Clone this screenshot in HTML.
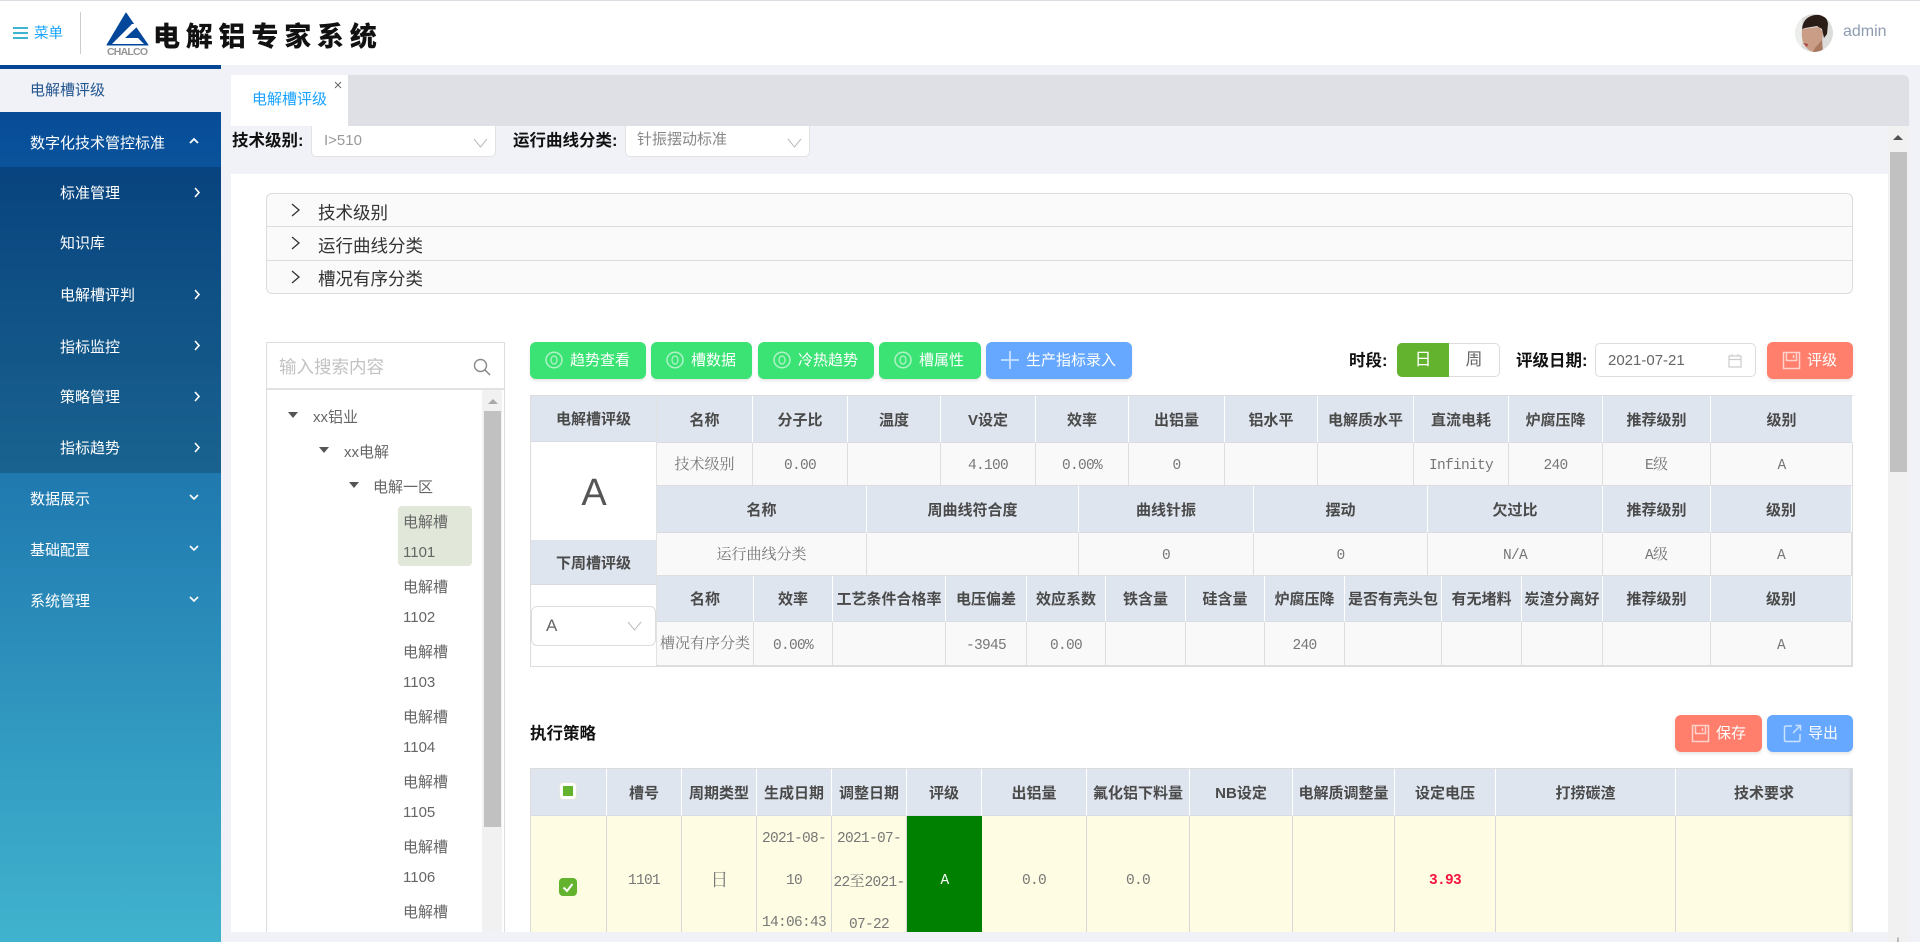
<!DOCTYPE html>
<html lang="zh-CN"><head><meta charset="utf-8"><title>电解铝专家系统</title>
<style>
*{box-sizing:border-box;margin:0;padding:0}
html,body{width:1920px;height:942px;overflow:hidden;background:#f0f2f7;font-family:"Liberation Sans","Noto Sans CJK SC",sans-serif;font-size:15px;color:#555}
.a{position:absolute;white-space:nowrap}
svg{display:block}
.s{left:30px;color:#fff;height:30px;line-height:30px}
.sub{left:60px;color:#fff;height:30px;line-height:30px}
.btn{height:37px;border-radius:6px;color:#fff;line-height:37px;box-shadow:0 2px 3px rgba(0,0,0,.1);top:342px}
.g{background:#3be274}.b{background:#66a8ff}.r{background:#ff7f6c}
.lb{line-height:30px;color:#111;font-weight:700;font-size:16.500px}
.tr{position:absolute;display:grid}
.tr>div{display:flex;align-items:center;justify-content:center;white-space:nowrap;overflow:hidden}
.h>div{background:#dfe5ef;color:#4a4a4a;font-weight:700;border-right:1px solid #fff;border-bottom:1px solid #d8dce2}
.d>div{background:#f9f9f9;color:#777;font-family:"Liberation Mono","Noto Serif CJK SC",monospace;font-size:14.500px;letter-spacing:-.7px;border-right:1px solid #dedede;border-bottom:1px solid #dedede;padding-top:4px}
.d span{font-family:"Noto Serif CJK SC","Liberation Serif",serif;font-size:15px;letter-spacing:0;position:relative;top:-3px}
.t{left:403px;color:#666;height:24px;line-height:24px}
.col{display:grid;grid-template-columns:96px 95px 93px 95px 93px 96px 93px 96px 95px 94px 108px 142px}
.tri{width:0;height:0;border-left:5px solid transparent;border-right:5px solid transparent;border-top:6px solid #555}
.y>div{background:#fefde3;color:#777;font-family:"Liberation Mono","Noto Serif CJK SC",monospace;font-size:14.500px;letter-spacing:-.7px;border-right:1px solid #d8d8d8;text-align:center;white-space:normal;padding-top:4px}
</style></head><body>

<!-- header -->
<div class="a" style="left:0;top:0;width:1920px;height:65px;background:#fff;border-top:1px solid #dcdde2"></div>
<svg class="a" style="left:13px;top:26px" width="16" height="14"><rect y="1" width="15" height="2" fill="#3fb4d0"/><rect y="6" width="15" height="2" fill="#3fb4d0"/><rect y="11" width="15" height="2" fill="#3fb4d0"/></svg>
<div class="a" style="left:34px;top:23px;line-height:22px;font-size:14.500px;color:#1aa3ff">菜单</div>
<div class="a" style="left:80px;top:12px;width:1px;height:42px;background:#ccc"></div>
<svg class="a" style="left:106px;top:12px" width="44" height="44" viewBox="0 0 44 44">
<path d="M20 1L42 33H1Z" fill="#03479b" stroke="#03479b" stroke-linejoin="round"/>
<path d="M26 12L34 12L19 26L32 26L38 32H6Z" fill="#fff"/>
<text x="1" y="43" font-family="Liberation Sans" font-size="10.500" font-weight="700" fill="#959595" textLength="41">CHALCO</text></svg>
<div class="a" style="left:153px;top:15px;line-height:40px;font-size:27px;font-weight:900;letter-spacing:5.800px;color:#111;font-family:'Noto Sans CJK SC',sans-serif">电解铝专家系统</div>
<svg class="a" style="left:1795px;top:14px;border-radius:50%" width="38" height="38" viewBox="0 0 38 38">
<rect width="38" height="38" fill="#dcdcda"/><rect width="7" height="38" fill="#eceeec"/>
<path d="M7 15Q6 24 9 30Q12 36 18 38H26L27 30L28 18L24 13Z" fill="#c99d86"/>
<path d="M20 34L27 26L28 38H18Z" fill="#a87860"/>
<path d="M7 15Q8 3 20 1Q32 0 33 10L32 20L29 24L27 15L22 12L10 14Z" fill="#2a1d18"/>
<path d="M8 29L13 30L12 33Z" fill="#a8433f"/></svg>
<div class="a" style="left:1843px;top:20px;line-height:24px;font-size:16px;color:#8e9bb0">admin</div>

<!-- sidebar -->
<div class="a" style="left:0;top:65px;width:221px;height:877px;background:linear-gradient(180deg,#034694 0,#40b3ce 100%)"></div>
<div class="a" style="left:0;top:69px;width:221px;height:43px;background:#f0f2f7"></div>
<div class="a" style="left:0;top:167px;width:221px;height:306px;background:rgba(0,0,0,.18)"></div>
<div class="a" style="left:30px;top:76px;height:30px;line-height:30px;color:#24568f;font-size:15px">电解槽评级</div>
<div class="a s" style="top:129px">数字化技术管控标准</div>
<svg class="a" style="left:188px;top:136px" width="12" height="10"><path d="M2 7L6 3L10 7" fill="none" stroke="#fff" stroke-width="1.800"/></svg>
<div class="a sub" style="top:179px">标准管理</div>
<div class="a sub" style="top:229px">知识库</div>
<div class="a sub" style="top:281px">电解槽评判</div>
<div class="a sub" style="top:333px">指标监控</div>
<div class="a sub" style="top:383px">策略管理</div>
<div class="a sub" style="top:434px">指标趋势</div>
<svg class="a" style="left:192px;top:186px" width="10" height="13"><path d="M3 2L7 6.500L3 11" fill="none" stroke="#fff" stroke-width="1.600"/></svg>
<svg class="a" style="left:192px;top:288px" width="10" height="13"><path d="M3 2L7 6.500L3 11" fill="none" stroke="#fff" stroke-width="1.600"/></svg>
<svg class="a" style="left:192px;top:339px" width="10" height="13"><path d="M3 2L7 6.500L3 11" fill="none" stroke="#fff" stroke-width="1.600"/></svg>
<svg class="a" style="left:192px;top:390px" width="10" height="13"><path d="M3 2L7 6.500L3 11" fill="none" stroke="#fff" stroke-width="1.600"/></svg>
<svg class="a" style="left:192px;top:441px" width="10" height="13"><path d="M3 2L7 6.500L3 11" fill="none" stroke="#fff" stroke-width="1.600"/></svg>
<div class="a s" style="top:485px">数据展示</div>
<div class="a s" style="top:536px">基础配置</div>
<div class="a s" style="top:587px">系统管理</div>
<svg class="a" style="left:188px;top:492px" width="12" height="10"><path d="M2 3L6 7L10 3" fill="none" stroke="#fff" stroke-width="1.600"/></svg>
<svg class="a" style="left:188px;top:543px" width="12" height="10"><path d="M2 3L6 7L10 3" fill="none" stroke="#fff" stroke-width="1.600"/></svg>
<svg class="a" style="left:188px;top:594px" width="12" height="10"><path d="M2 3L6 7L10 3" fill="none" stroke="#fff" stroke-width="1.600"/></svg>

<!-- tabs -->
<div class="a" style="left:231px;top:75px;width:1678px;height:51px;background:#dfe0e5;border-radius:0 6px 0 0"></div>
<div class="a" style="left:231px;top:75px;width:117px;height:51px;background:#fff"></div>
<div class="a" style="left:252px;top:85px;line-height:30px;color:#1aa3ff">电解槽评级</div>
<svg class="a" style="left:334px;top:81px" width="8" height="8"><path d="M1 1L7 7M7 1L1 7" stroke="#666" stroke-width="1"/></svg>

<!-- filters -->
<div class="a lb" style="left:232px;top:126px">技术级别:</div>
<div class="a" style="left:311px;top:126px;width:185px;height:31px;background:#fff;border:1px solid #e2e2e2;border-top:0;border-radius:0 0 5px 5px"></div>
<div class="a" style="left:324px;top:126px;line-height:30px;font-size:15px;color:#999">I&gt;510</div>
<svg class="a" style="left:473px;top:137px" width="15" height="12"><path d="M1 2L7.500 10L14 2" fill="none" stroke="#bbb" stroke-width="1"/></svg>
<div class="a lb" style="left:513px;top:126px">运行曲线分类:</div>
<div class="a" style="left:625px;top:126px;width:185px;height:31px;background:#fff;border:1px solid #e2e2e2;border-top:0;border-radius:0 0 5px 5px"></div>
<div class="a" style="left:637px;top:125px;line-height:30px;font-size:15px;color:#888">针振摆动标准</div>
<svg class="a" style="left:787px;top:137px" width="15" height="12"><path d="M1 2L7.500 10L14 2" fill="none" stroke="#bbb" stroke-width="1"/></svg>

<!-- panel -->
<div class="a" id="panel" style="left:231px;top:174px;width:1657px;height:758px;background:#fff"></div>
<div class="a" style="left:1888px;top:126px;width:21px;height:816px;background:#f1f1f1"></div>
<div class="a" style="left:1890px;top:152px;width:17px;height:320px;background:#c1c1c1"></div>
<svg class="a" style="left:1892px;top:134px" width="12" height="8"><path d="M1 6L6 1L11 6Z" fill="#505050"/></svg>
<svg class="a" style="left:1893px;top:937px" width="10" height="5"><path d="M4 1L5 0L6 1V5H4Z" fill="#bbb"/></svg>

<!-- collapse -->
<div class="a" style="left:266px;top:193px;width:1587px;height:101px;background:#fafafa;border:1px solid #dcdcdc;border-radius:6px"></div>
<div class="a" style="left:267px;top:226px;width:1585px;height:1px;background:#dcdcdc"></div>
<div class="a" style="left:267px;top:260px;width:1585px;height:1px;background:#dcdcdc"></div>
<svg class="a" style="left:290px;top:203px" width="12" height="14"><path d="M2 1L9 7L2 13" fill="none" stroke="#333" stroke-width="1.300"/></svg>
<svg class="a" style="left:290px;top:236px" width="12" height="14"><path d="M2 1L9 7L2 13" fill="none" stroke="#333" stroke-width="1.300"/></svg>
<svg class="a" style="left:290px;top:270px" width="12" height="14"><path d="M2 1L9 7L2 13" fill="none" stroke="#333" stroke-width="1.300"/></svg>
<div class="a" style="left:318px;top:198px;line-height:30px;font-size:17.500px;color:#333">技术级别</div>
<div class="a" style="left:318px;top:231px;line-height:30px;font-size:17.500px;color:#333">运行曲线分类</div>
<div class="a" style="left:318px;top:264px;line-height:30px;font-size:17.500px;color:#333">槽况有序分类</div>

<!-- tree -->
<div class="a" style="left:266px;top:342px;width:239px;height:590px;border:1px solid #ddd;border-bottom:0;background:#fff"></div>
<div class="a" style="left:267px;top:388px;width:237px;height:2px;background:#e2e2e2"></div>
<div class="a" style="left:279px;top:352px;line-height:30px;font-size:17.500px;color:#c2c2c2">输入搜索内容</div>
<svg class="a" style="left:472px;top:357px" width="20" height="20"><circle cx="8.500" cy="8.500" r="6" fill="none" stroke="#888" stroke-width="1.400"/><path d="M13 13L18 18" stroke="#888" stroke-width="1.500"/></svg>
<div class="a" style="left:482px;top:390px;width:20px;height:542px;background:#f1f1f1"></div>
<div class="a" style="left:484px;top:411px;width:17px;height:416px;background:#c1c1c1"></div>
<svg class="a" style="left:488px;top:398px" width="10" height="7"><path d="M0 6L5 1L10 6Z" fill="#aaa"/></svg>
<div class="a tri" style="left:288px;top:412px"></div>
<div class="a t" style="left:313px;top:406px">xx铝业</div>
<div class="a tri" style="left:319px;top:447px"></div>
<div class="a t" style="left:344px;top:441px">xx电解</div>
<div class="a tri" style="left:349px;top:482px"></div>
<div class="a t" style="left:373px;top:476px">电解一区</div>
<div class="a" style="left:398px;top:506px;width:74px;height:60px;background:#e1e8d9;border-radius:4px"></div>
<div class="a t" style="top:511px">电解槽</div><div class="a t" style="top:541px">1101</div>
<div class="a t" style="top:576px">电解槽</div><div class="a t" style="top:606px">1102</div>
<div class="a t" style="top:641px">电解槽</div><div class="a t" style="top:671px">1103</div>
<div class="a t" style="top:706px">电解槽</div><div class="a t" style="top:736px">1104</div>
<div class="a t" style="top:771px">电解槽</div><div class="a t" style="top:801px">1105</div>
<div class="a t" style="top:836px">电解槽</div><div class="a t" style="top:866px">1106</div>
<div class="a t" style="top:901px">电解槽</div>

<!-- buttons -->
<div class="a btn g" style="left:530px;width:116px;padding-left:40px">趋势查看</div>
<div class="a btn g" style="left:651px;width:101px;padding-left:40px">槽数据</div>
<div class="a btn g" style="left:758px;width:116px;padding-left:40px">冷热趋势</div>
<div class="a btn g" style="left:879px;width:102px;padding-left:40px">槽属性</div>
<div class="a btn b" style="left:986px;width:146px;padding-left:40px">生产指标录入</div>
<svg class="a" style="left:545px;top:351px" width="18" height="18"><ellipse cx="9" cy="9" rx="8" ry="7.800" fill="none" stroke="rgba(255,255,255,.6)" stroke-width="1.500"/><ellipse cx="9" cy="9" rx="3" ry="4" fill="none" stroke="rgba(255,255,255,.6)" stroke-width="1.300"/></svg>
<svg class="a" style="left:666px;top:351px" width="18" height="18"><ellipse cx="9" cy="9" rx="8" ry="7.800" fill="none" stroke="rgba(255,255,255,.6)" stroke-width="1.500"/><ellipse cx="9" cy="9" rx="3" ry="4" fill="none" stroke="rgba(255,255,255,.6)" stroke-width="1.300"/></svg>
<svg class="a" style="left:773px;top:351px" width="18" height="18"><ellipse cx="9" cy="9" rx="8" ry="7.800" fill="none" stroke="rgba(255,255,255,.6)" stroke-width="1.500"/><ellipse cx="9" cy="9" rx="3" ry="4" fill="none" stroke="rgba(255,255,255,.6)" stroke-width="1.300"/></svg>
<svg class="a" style="left:894px;top:351px" width="18" height="18"><ellipse cx="9" cy="9" rx="8" ry="7.800" fill="none" stroke="rgba(255,255,255,.6)" stroke-width="1.500"/><ellipse cx="9" cy="9" rx="3" ry="4" fill="none" stroke="rgba(255,255,255,.6)" stroke-width="1.300"/></svg>
<svg class="a" style="left:1001px;top:351px" width="18" height="18"><path d="M9 0V18M0 9H18" stroke="rgba(255,255,255,.65)" stroke-width="1.800"/></svg>

<div class="a lb" style="left:1349px;top:346px">时段:</div>
<div class="a" style="left:1397px;top:343px;width:103px;height:34px;border:1px solid #ddd;border-radius:5px;background:#fff"></div>
<div class="a" style="left:1397px;top:343px;width:52px;height:34px;background:#63b32f;border-radius:5px 0 0 5px;color:#fff;text-align:center;line-height:34px;font-size:17px">日</div>
<div class="a" style="left:1449px;top:343px;width:50px;height:34px;color:#666;text-align:center;line-height:34px;font-size:17px">周</div>
<div class="a lb" style="left:1516px;top:346px">评级日期:</div>
<div class="a" style="left:1595px;top:343px;width:161px;height:34px;border:1px solid #ddd;border-radius:5px;background:#fff"></div>
<div class="a" style="left:1608px;top:346px;line-height:30px;font-size:15px;color:#666;">2021-07-21</div>
<svg class="a" style="left:1728px;top:353px" width="14" height="15"><path d="M1 3H13V14H1ZM1 6.500H13M4 1V3M10 1V3" fill="none" stroke="#ccc" stroke-width="1.200"/></svg>
<div class="a btn r" style="left:1767px;width:86px;padding-left:40px">评级</div>
<svg class="a" style="left:1782px;top:351px" width="19" height="19"><path d="M1.500 1.500H17.500V17.500H1.500ZM4.500 1.500V9.500H14.500V1.500M11.500 4V7" fill="none" stroke="rgba(255,255,255,.65)" stroke-width="1.500"/></svg>

<!-- table 1 -->
<div class="a" style="left:530px;top:395px;width:1323px;height:272px;border:1px solid #dcdcdc;border-top-width:1px;background:#fff"></div>
<div class="tr h" style="left:531px;top:396px;grid-template-columns:126px;height:46px;border-right:0"><div>电解槽评级</div></div>
<div class="a" style="left:555px;top:466px;width:78px;text-align:center;line-height:54px;font-size:38px;color:#555">A</div>
<div class="tr h" style="left:531px;top:540px;grid-template-columns:126px;height:45px"><div>下周槽评级</div></div>
<div class="a" style="left:531px;top:606px;width:125px;height:40px;border:1px solid #ddd;border-radius:6px;background:#fff"></div>
<div class="a" style="left:546px;top:611px;line-height:30px;font-size:17px;color:#666">A</div>
<svg class="a" style="left:627px;top:620px" width="15" height="12"><path d="M1 2L7.500 10L14 2" fill="none" stroke="#bbb" stroke-width="1"/></svg>
<div class="a" style="left:656px;top:396px;width:1px;height:270px;background:#e2e2e2"></div>

<div class="tr col h" style="left:657px;top:396px;height:47px;width:1195px"><div>名称</div><div>分子比</div><div>温度</div><div>V设定</div><div>效率</div><div>出铝量</div><div>铝水平</div><div>电解质水平</div><div>直流电耗</div><div>炉腐压降</div><div>推荐级别</div><div>级别</div></div>
<div class="tr col d" style="left:657px;top:443px;height:43px;width:1195px"><div><span>技术级别</span></div><div>0.00</div><div></div><div>4.100</div><div>0.00%</div><div>0</div><div></div><div></div><div>Infinity</div><div>240</div><div>E<span>级</span></div><div>A</div></div>
<div class="tr h" style="left:657px;top:486px;height:47px;width:1195px;grid-template-columns:210px 212px 175px 174px 175px 108px 141px"><div>名称</div><div>周曲线符合度</div><div>曲线针振</div><div>摆动</div><div>欠过比</div><div>推荐级别</div><div>级别</div></div>
<div class="tr d" style="left:657px;top:533px;height:43px;width:1195px;grid-template-columns:210px 212px 175px 174px 175px 108px 141px"><div><span>运行曲线分类</span></div><div></div><div>0</div><div>0</div><div>N/A</div><div>A<span>级</span></div><div>A</div></div>
<div class="tr h" style="left:657px;top:576px;height:46px;width:1195px;grid-template-columns:97px 79px 113px 81px 79px 80px 79px 80px 97px 80px 81px 108px 141px"><div>名称</div><div>效率</div><div>工艺条件合格率</div><div>电压偏差</div><div>效应系数</div><div>铁含量</div><div>硅含量</div><div>炉腐压降</div><div>是否有壳头包</div><div>有无堵料</div><div>炭渣分离好</div><div>推荐级别</div><div>级别</div></div>
<div class="tr d" style="left:657px;top:622px;height:44px;width:1195px;grid-template-columns:97px 79px 113px 81px 79px 80px 79px 80px 97px 80px 81px 108px 141px"><div><span>槽况有序分类</span></div><div>0.00%</div><div></div><div>-3945</div><div>0.00</div><div></div><div></div><div>240</div><div></div><div></div><div></div><div></div><div>A</div></div>

<!-- strategy -->
<div class="a" style="left:530px;top:719px;line-height:30px;font-size:16.500px;color:#111;font-weight:700">执行策略</div>
<div class="a btn r" style="left:1675px;top:715px;width:87px;padding-left:41px">保存</div>
<svg class="a" style="left:1691px;top:724px" width="19" height="19"><path d="M1.500 1.500H17.500V17.500H1.500ZM4.500 1.500V9.500H14.500V1.500M11.500 4V7" fill="none" stroke="rgba(255,255,255,.65)" stroke-width="1.500"/></svg>
<div class="a btn b" style="left:1767px;top:715px;width:86px;padding-left:41px">导出</div>
<svg class="a" style="left:1783px;top:724px" width="19" height="19"><path d="M9 2H3Q1.500 2 1.500 3.500V16Q1.500 17.500 3 17.500H15.500Q17 17.500 17 16V10M10 9L17.500 1.500M12.500 1.500H17.500V6.500" fill="none" stroke="rgba(255,255,255,.65)" stroke-width="1.500"/></svg>

<div class="a" style="left:530px;top:768px;width:1323px;height:165px;overflow:hidden;border:1px solid #dcdcdc;border-width:1px 1px 0 1px">
<div class="tr h" style="left:0;top:0;height:47px;width:1322px;grid-template-columns:76px 75px 75px 75px 75px 75px 105px 103px 103px 102px 101px 180px 177px"><div></div><div>槽号</div><div>周期类型</div><div>生成日期</div><div>调整日期</div><div>评级</div><div>出铝量</div><div>氟化铝下料量</div><div>NB设定</div><div>电解质调整量</div><div>设定电压</div><div>打捞碳渣</div><div>技术要求</div></div>
<div class="tr y" style="left:0;top:47px;height:126px;width:1322px;grid-template-columns:76px 75px 75px 75px 75px 75px 105px 103px 103px 102px 101px 180px 177px">
<div></div><div>1101</div>
<div style="padding-top:0;font-family:'Noto Serif CJK SC',serif;font-size:18px">日</div>
<div style="line-height:42px;white-space:normal;word-break:break-all;display:block;padding-top:2px">2021-08-<br>10<br>14:06:43</div>
<div style="line-height:42px;white-space:normal;display:block;padding-top:2px">2021-07-<br>22<span style="font-family:'Noto Serif CJK SC',serif;font-size:15px;letter-spacing:0">至</span>2021-<br>07-22</div>
<div style="background:#008000;color:#fff;border:0">A</div>
<div>0.0</div><div>0.0</div><div></div><div></div>
<div style="color:#f5133f;font-weight:700">3.93</div><div></div><div></div></div>
<div class="a" style="right:0;top:0;width:4px;height:165px;background:linear-gradient(90deg,rgba(0,0,0,0),rgba(0,0,0,.08))"></div>
</div>
<div class="a" style="left:559px;top:782px;width:18px;height:18px;background:#fff;border-radius:4px;border:1px solid #e6e6e6"></div>
<div class="a" style="left:563px;top:786px;width:10px;height:10px;background:#63b32f"></div>
<svg class="a" style="left:559px;top:878px" width="18" height="18"><rect width="18" height="18" rx="4" fill="#63b32f"/><path d="M4.500 9.500L8 13L13.500 6" fill="none" stroke="#fff" stroke-width="2"/></svg>
<div class="a" style="left:231px;top:932px;width:1657px;height:10px;background:#f0f2f7"></div>
</body></html>
